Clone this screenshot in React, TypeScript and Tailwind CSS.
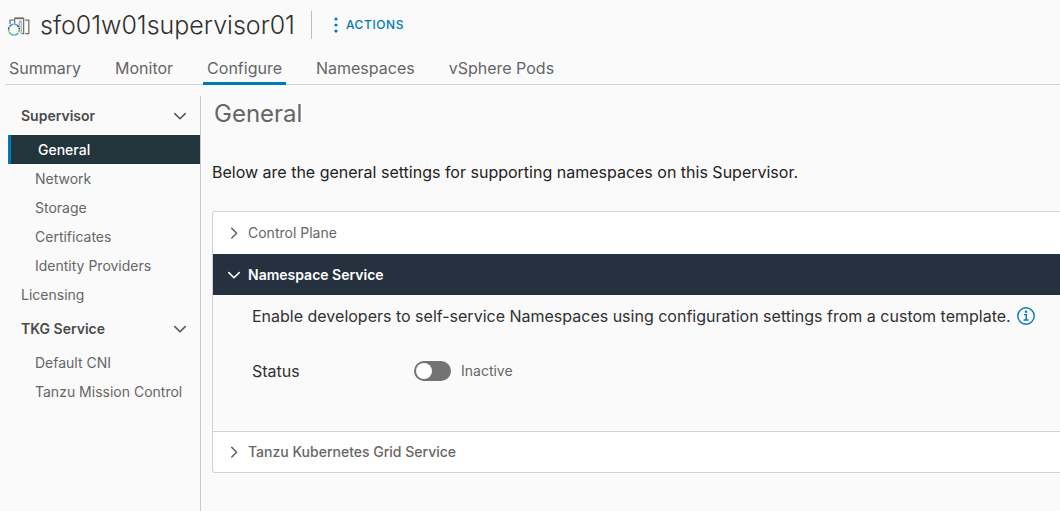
import { useState, type ReactNode } from "react";

const tabs = ["Summary", "Monitor", "Configure", "Namespaces", "vSphere Pods"];

function Chevron({ down = false, className = "" }: { down?: boolean; className?: string }) {
  return (
    <svg
      viewBox="0 0 14 14"
      className={`size-3.5 shrink-0 ${className}`}
      fill="none"
      stroke="currentColor"
      strokeWidth="1.6"
      strokeLinecap="round"
      strokeLinejoin="round"
      aria-hidden="true"
    >
      <path d={down ? "M1.8 4.6 7 9.8l5.2-5.2" : "M4.8 2.4 9.6 7.2l-4.8 4.8"} />
    </svg>
  );
}

function SupervisorIcon() {
  return (
    <svg viewBox="0 0 24 22" className="mt-1 h-[22px] w-6 shrink-0" fill="none" aria-hidden="true">
      <path d="M3 8V4.2h3.6M7.6 9V2.3h9V17M14.6 17.6h2.6M18 4.2h3.8v13.4h-3.6" stroke="#737373" strokeWidth="1.3" />
      <path d="M12.2 5.4v6M12.2 5.4h2v12.2" stroke="#a3a3a3" strokeWidth="1.1" />
      <path d="M8 2.3h8.2" stroke="#737373" strokeWidth="1.8" />
      <circle cx="7" cy="13.6" r="6" fill="#fafafa" />
      <g strokeWidth="1.5" strokeDasharray="2.6 0.8">
        <path d="M1.6 13.6a5.4 5.4 0 0 1 2.4-4.5" stroke="#2a4f9e" />
        <path d="M4 9.1a5.4 5.4 0 0 1 6 0" stroke="#1fb5d6" />
        <path d="M10 9.1a5.4 5.4 0 0 1 2.4 4.5" stroke="#2a4f9e" />
        <path d="M12.4 13.6a5.4 5.4 0 0 1-2.4 4.5" stroke="#7ab648" />
        <path d="M10 18.1a5.4 5.4 0 0 1-6 0" stroke="#1fb5d6" />
        <path d="M4 18.1a5.4 5.4 0 0 1-2.4-4.5" stroke="#7ab648" />
      </g>
    </svg>
  );
}

function NavGroup({ title, children }: { title: string; children: ReactNode }) {
  const [open, setOpen] = useState(true);
  return (
    <div>
      <button
        type="button"
        aria-expanded={open}
        onClick={() => setOpen(!open)}
        className="flex h-[39px] w-full items-center justify-between pr-3 pl-[13px] text-sm font-semibold text-[#4a4a4a]"
      >
        {title}
        <Chevron down={open} className="mr-px text-[#4a5a66]" />
      </button>
      {open && children}
    </div>
  );
}

function NavLink({ label, active = false }: { label: string; active?: boolean }) {
  return (
    <a
      href="#"
      aria-current={active ? "page" : undefined}
      className={
        active
          ? "flex h-[29px] items-center border-l-3 border-[#0079b8] bg-[#22343c] pl-[27px] text-sm font-medium text-white"
          : "flex h-[29px] items-center pl-[27px] text-sm text-[#666]"
      }
    >
      {label}
    </a>
  );
}

export default function App() {
  const [on, setOn] = useState(false);
  return (
    <div className="flex min-h-screen flex-col overflow-x-hidden bg-[#fafafa] pl-[5px] font-['Inter','Liberation_Sans',sans-serif] text-[#313131]">
      <header className="flex h-[50px] items-center pl-0.5">
        <SupervisorIcon />
        <h1 className="ml-[9px] text-[25px] leading-8 font-light whitespace-nowrap text-[#313131]">sfo01w01supervisor01</h1>
        <div className="ml-4 h-7 w-px bg-[#bdbdbd]" />
        <button type="button" className="ml-[22px] flex items-center gap-2 text-xs font-medium tracking-wider text-[#0079b8]">
          <svg viewBox="0 0 4 16" className="h-4 w-1" fill="currentColor" aria-hidden="true">
            <circle cx="2" cy="2" r="1.6" />
            <circle cx="2" cy="8" r="1.6" />
            <circle cx="2" cy="14" r="1.6" />
          </svg>
          ACTIONS
        </button>
      </header>

      <nav aria-label="Object" className="flex h-[35px] gap-[26px] border-b border-[#ccd3d9]">
        {tabs.map((t) => (
          <a
            key={t}
            href="#"
            className={
              t === "Configure"
                ? "-mb-px flex items-center border-b-3 border-[#0079b8] px-1 pt-1 text-base text-[#666]"
                : "-mb-px flex items-center border-b-3 border-transparent px-1 pt-1 text-base text-[#666]"
            }
          >
            {t}
          </a>
        ))}
      </nav>

      <div className="flex flex-1 pt-[11px] pl-[3px]">
        <nav aria-label="Settings" className="w-[193px] shrink-0 border-r border-[#ccc]">
          <NavGroup title="Supervisor">
            <NavLink label="General" active />
            <NavLink label="Network" />
            <NavLink label="Storage" />
            <NavLink label="Certificates" />
            <NavLink label="Identity Providers" />
          </NavGroup>
          <a href="#" className="flex h-[29px] items-center pl-[13px] text-sm text-[#666]">
            Licensing
          </a>
          <NavGroup title="TKG Service">
            <NavLink label="Default CNI" />
            <NavLink label="Tanzu Mission Control" />
          </NavGroup>
        </nav>

        <main className="min-w-0 flex-1 pl-[11px]">
          <h2 className="pt-0.5 pl-0.5 text-2xl text-[#666]">General</h2>
          <p className="mt-[30px] text-base leading-6 text-[#222]">
            Below are the general settings for supporting namespaces on this Supervisor.
          </p>
          <div className="mt-[27px] rounded-l-[3px] border-y border-l border-[#ccd3d9]">
            <button type="button" aria-expanded="false" className="flex h-[42px] w-full items-center gap-[7px] rounded-tl-[3px] bg-white pl-3.5 text-sm text-[#666]">
              <Chevron />
              Control Plane
            </button>
            <button type="button" aria-expanded="true" className="flex h-[41px] w-full items-center gap-[7px] bg-[#25313f] pl-3.5 text-sm font-semibold text-white">
              <Chevron down />
              Namespace Service
            </button>
            <div className="h-[136px] pt-[9px] pl-[39px]">
              <div className="flex items-center gap-1.5 text-base leading-6 whitespace-nowrap">
                <span>Enable developers to self-service Namespaces using configuration settings from a custom template.</span>
                <button type="button" aria-label="More information" className="text-[#0079b8]">
                  <svg viewBox="0 0 18 18" className="size-[18px]" fill="none" stroke="currentColor" aria-hidden="true">
                    <circle cx="9" cy="9" r="8.2" strokeWidth="1.4" />
                    <path d="M7 7.6h2.3v5.2M6.6 13h5" strokeWidth="1.4" />
                    <circle cx="9" cy="4.8" r="1.2" fill="currentColor" stroke="none" />
                  </svg>
                </button>
              </div>
              <div className="mt-[31px] flex items-center leading-6">
                <span id="status-label" className="w-[162px] text-base">Status</span>
                <label className="flex items-center gap-2.5 text-sm leading-6 text-[#666]">
                  <input
                    type="checkbox"
                    role="switch"
                    aria-labelledby="status-label"
                    checked={on}
                    onChange={() => setOn(!on)}
                    className="h-5 w-[37px] appearance-none rounded-full bg-[#737373] p-0.5 before:block before:size-4 before:rounded-full before:bg-white checked:bg-[#5aa220] checked:before:ml-auto"
                  />
                  {on ? "Active" : "Inactive"}
                </label>
              </div>
            </div>
            <button type="button" aria-expanded="false" className="flex h-[41px] w-full items-center gap-[7px] rounded-bl-[3px] border-t border-[#ccd3d9] bg-white pl-3.5 text-sm font-medium text-[#666]">
              <Chevron />
              Tanzu Kubernetes Grid Service
            </button>
          </div>
        </main>
      </div>
    </div>
  );
}
